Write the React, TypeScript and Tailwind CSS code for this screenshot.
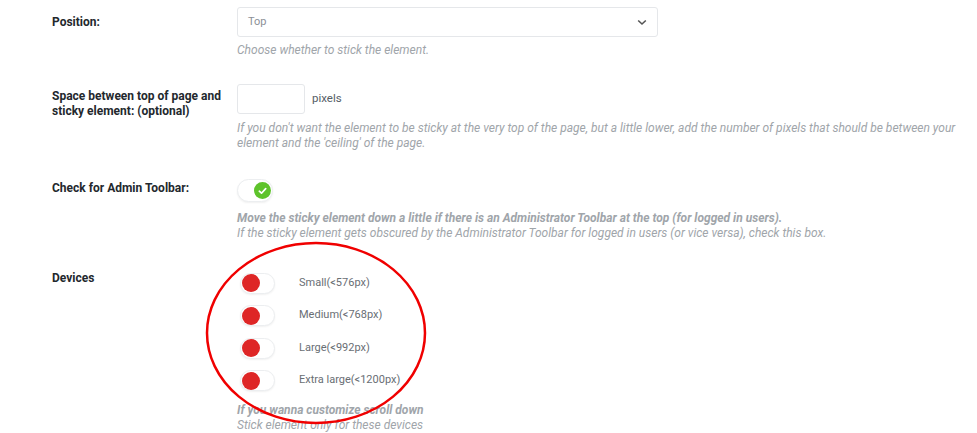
import React from "react";

const Label = ({ children, className = "" }: { children: React.ReactNode; className?: string }) => (
  <div className={`w-[185px] shrink-0 text-[12px] leading-[15px] font-bold text-[#23282d] ${className}`}>{children}</div>
);

const DeviceToggle = ({ label }: { label: string }) => (
  <div className="flex items-center h-[32.5px]">
    <div className="relative w-[35px] h-[21px] rounded-full bg-white border border-[#eceef0] shadow-[0_1px_2px_rgba(0,0,0,0.06)] ml-[3px]">
      <div className="absolute left-[1px] top-[0.5px] w-[18px] h-[18px] rounded-full bg-[#de2626]" />
    </div>
    <span className="ml-[24px] text-[11px] text-[#696e74]">{label}</span>
  </div>
);

export default function App() {
  return (
    <div className="relative w-[977px] h-[433px] bg-white overflow-hidden font-['Roboto',sans-serif] pl-[52px] pt-[7px]">
      {/* Position */}
      <div className="flex">
        <Label className="pt-[8px]">Position:</Label>
        <div>
          <div className="w-[421px] h-[30px] border border-[#e5e7ea] rounded-[3px] flex items-center justify-between pl-[10px] pr-[10px]">
            <span className="text-[11px] text-[#8c9097]">Top</span>
            <svg width="10" height="7" viewBox="0 0 10 7">
              <path d="M1.2 1.5 L5 5 L8.8 1.5" fill="none" stroke="#555" strokeWidth="1.6" />
            </svg>
          </div>
          <div className="mt-[5.5px] text-[12px] leading-[15px] italic text-[#a0a5aa]">Choose whether to stick the element.</div>
        </div>
      </div>

      {/* Space */}
      <div className="flex mt-[26.5px]">
        <Label className="pt-[4.5px]">
          Space between top of page and
          <br />
          sticky element: (optional)
        </Label>
        <div>
          <div className="flex items-center">
            <div className="w-[68px] h-[30px] border border-[#e5e7ea] rounded-[3px]" />
            <span className="ml-[7px] text-[11.5px] text-[#555d66]">pixels</span>
          </div>
          <div className="mt-[6.5px] w-[722px] text-[12px] leading-[15px] italic text-[#a0a5aa]">
            If you don't want the element to be sticky at the very top of the page, but a little lower, add the number of pixels that should be between your element and the 'ceiling' of the page.
          </div>
        </div>
      </div>

      {/* Admin toolbar */}
      <div className="flex mt-[28.5px]">
        <Label className="pt-[1.5px]">Check for Admin Toolbar:</Label>
        <div>
          <div className="relative w-[36px] h-[23px] rounded-full bg-white border border-[#eceef0] shadow-[0_1px_2px_rgba(0,0,0,0.06)]">
            <div className="absolute right-[1px] top-[2px] w-[17px] h-[17px] rounded-full bg-[#5ec32b] flex items-center justify-center">
              <svg width="9" height="8" viewBox="0 0 9 8">
                <path d="M1.3 4.2 L3.5 6.2 L7.7 1.6" fill="none" stroke="white" strokeWidth="1.7" strokeLinecap="round" strokeLinejoin="round" />
              </svg>
            </div>
          </div>
          <div className="mt-[8.5px] text-[12px] leading-[15px] italic text-[#a0a5aa]">
            <div className="font-bold">Move the sticky element down a little if there is an Administrator Toolbar at the top (for logged in users).</div>
            <div>If the sticky element gets obscured by the Administrator Toolbar for logged in users (or vice versa), check this box.</div>
          </div>
        </div>
      </div>

      {/* Devices */}
      <div className="flex mt-[26.25px]">
        <Label className="pt-[4px]">Devices</Label>
        <div>
          <div className="flex flex-col">
            <DeviceToggle label="Small(<576px)" />
            <DeviceToggle label="Medium(<768px)" />
            <DeviceToggle label="Large(<992px)" />
            <DeviceToggle label="Extra large(<1200px)" />
          </div>
          <div className="mt-[6px] text-[12px] leading-[15px] italic text-[#a0a5aa]">
            <div className="font-bold">If you wanna customize scroll down</div>
            <div>Stick element only for these devices</div>
          </div>
        </div>
      </div>

      {/* red annotation ellipse */}
      <svg className="absolute left-0 top-0 pointer-events-none" width="977" height="433">
        <ellipse cx="316" cy="333" rx="109" ry="90" fill="none" stroke="#f00000" strokeWidth="2.5" />
      </svg>
    </div>
  );
}
